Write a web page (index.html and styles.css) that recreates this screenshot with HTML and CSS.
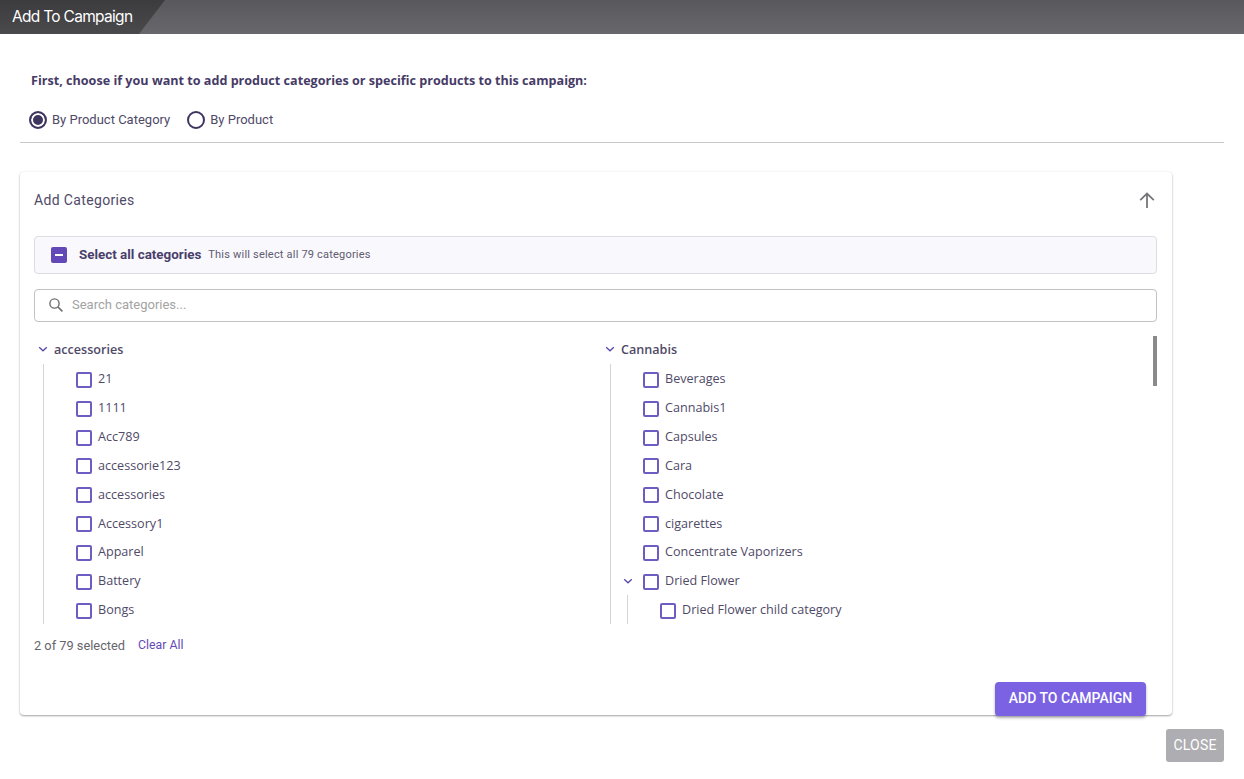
FILE: index.html
```html
<!DOCTYPE html>
<html>

<head>
    <title>Add To Campaign</title>
    <link rel="stylesheet" href="styles.css">
</head>

<body>
    <svg class="icon-defs" width="0" height="0">
        <symbol id="chev" viewBox="0 0 10 6">
            <path d="M1.2 1.2 5 4.8 8.8 1.2" fill="none" stroke="currentColor" stroke-width="1.3" />
        </symbol>
    </svg>

    <div class="title-bar">
        <div class="title-tab">Add To Campaign</div>
    </div>

    <div class="content">
        <p class="intro">First, choose if you want to add product categories or specific products to this campaign:</p>
        <div class="radios">
            <label class="radio"><span class="radio-dot checked"></span>By Product Category</label>
            <label class="radio"><span class="radio-dot"></span>By Product</label>
        </div>
        <hr class="divider">

        <div class="card">
            <div class="card-head">
                <span class="card-title">Add Categories</span>
                <svg class="arrow-up" width="18" height="18" viewBox="0 0 18 18">
                    <path d="M9 17V3M2.2 9.2 9 2.6 15.8 9.2" fill="none" stroke="currentColor" stroke-width="1.8" />
                </svg>
            </div>

            <div class="select-all">
                <span class="check-mixed"></span>
                <strong>Select all categories</strong>
                <small>This will select all 79 categories</small>
            </div>

            <div class="search">
                <svg width="16" height="16" viewBox="0 0 16 16">
                    <circle cx="6.5" cy="6.5" r="4.6" fill="none" stroke="currentColor" stroke-width="1.4" />
                    <path d="M10 10 14.4 14.4" stroke="currentColor" stroke-width="1.6" />
                </svg>
                <span>Search categories...</span>
            </div>

            <div class="tree">
                <div class="tree-col">
                    <div class="parent"><svg class="chev"><use href="#chev" /></svg>accessories</div>
                    <ul class="children">
                        <li><span class="box"></span>21</li>
                        <li><span class="box"></span>1111</li>
                        <li><span class="box"></span>Acc789</li>
                        <li><span class="box"></span>accessorie123</li>
                        <li><span class="box"></span>accessories</li>
                        <li><span class="box"></span>Accessory1</li>
                        <li><span class="box"></span>Apparel</li>
                        <li><span class="box"></span>Battery</li>
                        <li><span class="box"></span>Bongs</li>
                    </ul>
                </div>
                <div class="tree-col">
                    <div class="parent"><svg class="chev"><use href="#chev" /></svg>Cannabis</div>
                    <ul class="children">
                        <li><span class="box"></span>Beverages</li>
                        <li><span class="box"></span>Cannabis1</li>
                        <li><span class="box"></span>Capsules</li>
                        <li><span class="box"></span>Cara</li>
                        <li><span class="box"></span>Chocolate</li>
                        <li><span class="box"></span>cigarettes</li>
                        <li><span class="box"></span>Concentrate Vaporizers</li>
                        <li class="has-sub"><svg class="chev sub-chev"><use href="#chev" /></svg><span class="box"></span>Dried Flower</li>
                        <li class="sub-row"><span class="box"></span>Dried Flower child category</li>
                    </ul>
                </div>
                <div class="scroll-thumb"></div>
            </div>

            <div class="selected-count">
                <span>2 of 79 selected</span>
                <a class="clear-all">Clear All</a>
            </div>

            <div class="card-foot">
                <button class="add-btn">ADD TO CAMPAIGN</button>
            </div>
        </div>

        <div class="page-foot">
            <button class="close-btn">CLOSE</button>
        </div>
    </div>
</body>

</html>
```

FILE: styles.css
```css
/* page */
body {
    margin: 0;
    background-color: #fff;
    font-family: Roboto, Arial, sans-serif;
    color: #4a3f6b;
}

.icon-defs {
    position: absolute;
}

/* title bar */
.title-bar {
    height: 34px;
    background: linear-gradient(to bottom, #59585c, #68676c);
}

.title-tab {
    width: 165px;
    height: 34px;
    box-sizing: border-box;
    padding-left: 12px;
    line-height: 33px;
    font-family: Inter, sans-serif;
    font-size: 15.5px;
    letter-spacing: -0.7px;
    color: #fff;
    background: linear-gradient(to bottom, #3c3b3d, #4a494c);
    clip-path: polygon(0 0, 100% 0, 139px 100%, 0 100%);
}

.content {
    padding: 0 20px;
}

.intro {
    margin: 0;
    padding: 38px 0 0 11px;
    font-family: "Open Sans", sans-serif;
    font-size: 12.6px;
    font-weight: 700;
    line-height: 18px;
    color: #463b66;
}

.radios {
    display: flex;
    gap: 17px;
    margin-top: 20px;
    padding-left: 9px;
}

.radio {
    display: flex;
    align-items: center;
    gap: 5px;
    font-size: 13px;
    line-height: 20px;
    color: #4f4a68;
}

.radio-dot {
    width: 18px;
    height: 18px;
    box-sizing: border-box;
    border: 2px solid #40355f;
    border-radius: 50%;
}

.radio-dot.checked {
    background-color: #40355f;
    box-shadow: inset 0 0 0 2px #fff;
}

.divider {
    height: 1px;
    margin: 12px 0 0;
    border: none;
    background-color: #c8c8c8;
}

/* card */
.card {
    width: 1152px;
    height: 543px;
    box-sizing: border-box;
    margin-top: 29px;
    padding: 0 15px 0 14px;
    border-radius: 4px;
    background-color: #fff;
    box-shadow: 0 1px 2px rgba(0, 0, 0, 0.35), 0 0 3px rgba(0, 0, 0, 0.06);
}

.card-head {
    display: flex;
    justify-content: space-between;
    align-items: center;
    height: 56px;
}

.card-title {
    font-size: 14px;
    letter-spacing: 0.35px;
    color: #4f4a68;
}

.arrow-up {
    color: #77767b;
    margin-right: 1px;
}

.select-all {
    display: flex;
    align-items: center;
    height: 38px;
    box-sizing: border-box;
    margin-top: 8px;
    padding-left: 16px;
    padding-bottom: 1px;
    border: 1px solid #dcdce2;
    border-radius: 4px;
    background-color: #f9f8fd;
}

.check-mixed {
    position: relative;
    width: 16px;
    height: 16px;
    margin-right: 12px;
    border-radius: 2px;
    background-color: #6349b8;
}

/* the little dash inside the checkbox */
.check-mixed::after {
    content: "";
    position: absolute;
    left: 4px;
    top: 7px;
    width: 8px;
    height: 2px;
    background-color: #fff;
}

.select-all strong {
    font-size: 13.4px;
    font-weight: 700;
    color: #4a3f6b;
}

.select-all small {
    margin-left: 7px;
    font-size: 11px;
    letter-spacing: 0.2px;
    color: #5f5b70;
}

.search {
    display: flex;
    align-items: center;
    gap: 8px;
    height: 33px;
    box-sizing: border-box;
    margin-top: 15px;
    padding-left: 13px;
    padding-bottom: 2px;
    border: 1px solid #c2c2c2;
    border-radius: 4px;
    font-size: 13px;
    color: #a3a3a3;
}

.search svg {
    color: #6e6e6e;
}

/* category tree */
.tree {
    position: relative;
    display: grid;
    grid-template-columns: 567px 1fr;
    height: 288px;
    margin-top: 14px;
    overflow: hidden;
    font-family: "Open Sans", sans-serif;
    font-size: 12.6px;
    color: #4f4a68;
}

.parent {
    display: flex;
    align-items: center;
    height: 26px;
    margin-bottom: 2.4px;
    font-weight: 600;
}

.chev {
    width: 10px;
    height: 6px;
    margin: 0 6px 0 4px;
    color: #5b48a8;
}

.children {
    margin: 0 0 0 9px;
    padding: 0;
    list-style: none;
    border-left: 1px solid #d4d4d4;
}

.children li {
    display: flex;
    align-items: center;
    height: 28.85px;
    padding-left: 32px;
    position: relative;
}

.box {
    width: 16px;
    height: 16px;
    box-sizing: border-box;
    margin-top: 2px;
    margin-right: 6px;
    border: 2px solid #6f5cc2;
    border-radius: 2px;
}

.children .has-sub .sub-chev {
    position: absolute;
    left: 12px;
    margin: 0;
}

/* child of a child, with its own guide line */
.children .sub-row {
    padding-left: 49px;
}

.children .sub-row::before {
    content: "";
    position: absolute;
    left: 16px;
    top: 0;
    bottom: 0;
    width: 1px;
    background-color: #d4d4d4;
}

.scroll-thumb {
    position: absolute;
    top: 0;
    right: 0;
    width: 4px;
    height: 50px;
    background-color: #8a8a8a;
}

.selected-count {
    display: flex;
    align-items: center;
    gap: 13px;
    margin-top: 12px;
    height: 18px;
    font-size: 12.8px;
    color: #66656a;
}

.clear-all {
    font-size: 12.3px;
    color: #6349b8;
}

.card-foot {
    display: flex;
    justify-content: flex-end;
    margin-top: 28px;
    padding-right: 11px;
}

.add-btn {
    width: 151px;
    height: 34px;
    padding: 0 0 3px;
    border: none;
    border-radius: 4px;
    background-color: #7a62e3;
    color: #fff;
    font-family: Roboto, sans-serif;
    font-size: 14px;
    font-weight: 500;
    box-shadow: 0 2px 3px rgba(0, 0, 0, 0.3);
}

.page-foot {
    display: flex;
    justify-content: flex-end;
    margin-top: 14px;
}

.close-btn {
    width: 58px;
    height: 33px;
    padding: 0 0 2px;
    border: none;
    border-radius: 3px;
    background-color: #aeadb1;
    color: #fff;
    font-family: Roboto, sans-serif;
    font-size: 14px;
    letter-spacing: 0.2px;
}
```
